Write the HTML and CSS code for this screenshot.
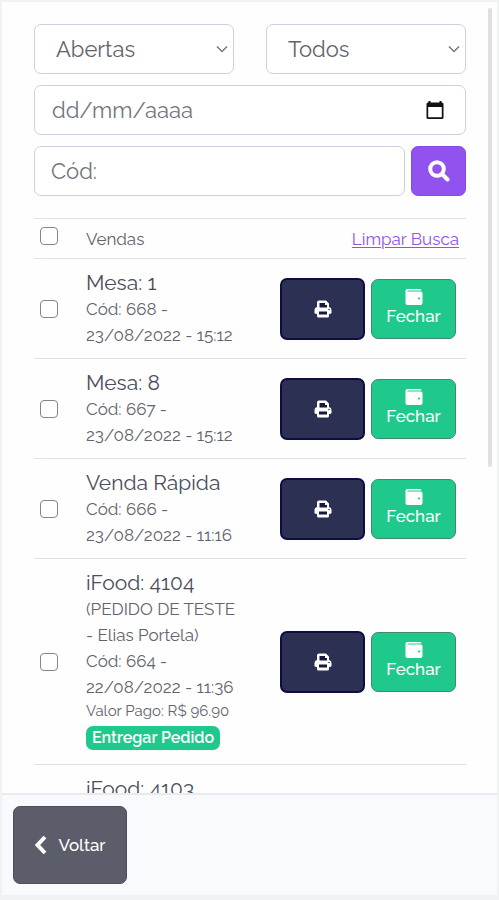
FILE: index.html
```html
<!DOCTYPE html>
<html lang="pt-BR">
<head>
<meta charset="utf-8">
<meta name="viewport" content="width=device-width, initial-scale=1">
<title>Vendas</title>
<link rel="stylesheet" href="styles.css">
</head>
<body>
<svg class="sprite" aria-hidden="true">
  <symbol id="print" viewBox="0 0 18 18">
    <path d="M3 7V2.500Q3 .5 5 .5H12L15 3.500V7Q17.500 7.500 17.500 10V13Q17.500 14 15 14V16Q15 17.500 13.500 17.500H4.500Q3 17.500 3 16V14Q.5 14 .5 13V10Q.5 7.500 3 7Z" fill="#fff"/>
    <path d="M5.500 3H11V5H13V7.500H5.500ZM5 11.500H13V14.500H5Z" fill="#171a3c"/>
    <circle cx="15" cy="9.500" r=".8" fill="#2c3154"/>
  </symbol>
  <symbol id="wallet" viewBox="0 0 18 16">
    <path d="M2.500 0H15Q16.500 0 16.500 1.500H2.500V2.500H16Q17.500 2.500 17.500 4.500V14Q17.500 16 15.500 16H2.500Q.5 16 .5 14V2Q.5 0 2.500 0Z" fill="#fff"/>
    <circle cx="14" cy="9.500" r="1.100" fill="#1fc98b"/>
  </symbol>
  <symbol id="calendar" viewBox="0 0 18 20">
    <path d="M2.500 1H4.500V2.500H13.500V1H15.500V2.500H16Q17.500 2.500 17.500 4V17.500Q17.500 19 16 19H2Q.5 19 .5 17.500V4Q.5 2.500 2 2.500H2.500ZM2.200 7V17.300H15.800V7Z" fill="#111" fill-rule="evenodd"/>
  </symbol>
</svg>
<div class="app">
  <main class="content">
    <form class="filters">
      <div class="selects">
        <div class="select">
          <select aria-label="Situação"><option>Abertas</option></select>
          <svg class="chevron" viewBox="0 0 12 8" aria-hidden="true"><path d="M1 1.500L6 6.500L11 1.500"/></svg>
        </div>
        <div class="select">
          <select aria-label="Tipo"><option>Todos</option></select>
          <svg class="chevron" viewBox="0 0 12 8" aria-hidden="true"><path d="M1 1.500L6 6.500L11 1.500"/></svg>
        </div>
      </div>
      <div class="field date">
        <input type="text" aria-label="Data" placeholder="dd/mm/aaaa">
        <button type="button" class="pick" aria-label="Abrir calendário"><svg width="18" height="20"><use href="#calendar"/></svg></button>
      </div>
      <div class="search">
        <input class="field" type="text" aria-label="Código" placeholder="Cód:">
        <button class="go" type="button" aria-label="Buscar"><svg width="22" height="22" viewBox="0 0 22 22"><circle cx="9" cy="9" r="6.800"/><path d="M14 14L19.500 19.500"/></svg></button>
      </div>
    </form>
    <table>
      <thead>
        <tr>
          <th class="check"><input type="checkbox" aria-label="Selecionar todas"></th>
          <th>Vendas</th>
          <th class="clear"><a href="#">Limpar Busca</a></th>
        </tr>
      </thead>
      <tbody>
        <tr>
          <td class="check"><input type="checkbox" aria-label="Selecionar Mesa: 1"></td>
          <td class="sale"><div class="name">Mesa: 1</div><div>Cód: 668 - <span class="when">23/08/2022 - 15:12</span></div></td>
          <td><div class="actions"><button class="print" aria-label="Imprimir"><svg width="18" height="18"><use href="#print"/></svg></button><button class="close"><svg width="18" height="16"><use href="#wallet"/></svg>Fechar</button></div></td>
        </tr>
        <tr>
          <td class="check"><input type="checkbox" aria-label="Selecionar Mesa: 8"></td>
          <td class="sale"><div class="name">Mesa: 8</div><div>Cód: 667 - <span class="when">23/08/2022 - 15:12</span></div></td>
          <td><div class="actions"><button class="print" aria-label="Imprimir"><svg width="18" height="18"><use href="#print"/></svg></button><button class="close"><svg width="18" height="16"><use href="#wallet"/></svg>Fechar</button></div></td>
        </tr>
        <tr>
          <td class="check"><input type="checkbox" aria-label="Selecionar Venda Rápida"></td>
          <td class="sale"><div class="name">Venda Rápida</div><div>Cód: 666 - <span class="when">23/08/2022 - 11:16</span></div></td>
          <td><div class="actions"><button class="print" aria-label="Imprimir"><svg width="18" height="18"><use href="#print"/></svg></button><button class="close"><svg width="18" height="16"><use href="#wallet"/></svg>Fechar</button></div></td>
        </tr>
        <tr>
          <td class="check"><input type="checkbox" aria-label="Selecionar iFood: 4104"></td>
          <td class="sale"><div class="name">iFood: 4104</div><div>(PEDIDO DE TESTE - Elias Portela)</div><div>Cód: 664 - <span class="when">22/08/2022 - 11:36</span></div><div class="paid">Valor Pago: R$ 96.90</div><span class="badge">Entregar Pedido</span></td>
          <td><div class="actions"><button class="print" aria-label="Imprimir"><svg width="18" height="18"><use href="#print"/></svg></button><button class="close"><svg width="18" height="16"><use href="#wallet"/></svg>Fechar</button></div></td>
        </tr>
        <tr>
          <td class="check"></td>
          <td class="sale"><div class="name">iFood: 4103</div></td>
          <td></td>
        </tr>
      </tbody>
    </table>
    <div class="thumb"></div>
  </main>
  <footer>
    <button class="back"><svg width="14" height="20" viewBox="0 0 14 20" aria-hidden="true"><path d="M11 2L3.500 10L11 18"/></svg>Voltar</button>
  </footer>
</div>
</body>
</html>
```
FILE: styles.css
```css
* { box-sizing: border-box; }
body {
  margin: 0;
  background: #f1f2f3;
  color: #62646d;
  font-family: Raleway, Lato, "Open Sans", sans-serif;
  font-size: 17px;
  line-height: 26px;
}
button, input, select { font: inherit; color: inherit; }
button { padding: 0; cursor: pointer; }
svg { flex: none; }
.sprite { display: none; }

.app {
  display: flex;
  flex-direction: column;
  height: 100vh;
  padding: 2px 2px 5px;
}
.content {
  position: relative;
  flex: 1;
  min-height: 0;
  overflow: hidden;
  padding: 22px 31px 0 32px;
  background: #fefefe;
}
.thumb {
  position: absolute;
  top: 6px;
  right: 5px;
  width: 4px;
  height: 58%;
  border-radius: 2px;
  background: #e0e0e2;
}

.filters {
  display: flex;
  flex-direction: column;
  gap: 11px;
  margin-bottom: 22px;
  font-size: 22px;
}
.selects { display: grid; grid-template-columns: 1fr 1fr; gap: 32px; }
.select { position: relative; }
.select select, .field {
  width: 100%;
  height: 50px;
  border: 1px solid #cfcfe0;
  border-radius: 7px;
  background: #fff;
}
.select select { appearance: none; padding: 0 30px 0 21px; outline: none; }
.chevron {
  position: absolute;
  top: 21px;
  right: 6px;
  width: 12px;
  height: 8px;
  pointer-events: none;
  fill: none;
  stroke: #777982;
  stroke-width: 1.5;
}
.field { padding: 0 17px; }
.date { display: flex; align-items: center; padding-right: 21px; }
.date input { flex: 1; min-width: 0; padding: 0; border: 0; outline: none; background: none; }
.pick { display: flex; border: 0; background: none; }
::placeholder { color: #73757e; opacity: 1; }
.search { display: flex; gap: 6px; }
.search .field { flex: 1; min-width: 0; padding: 0 16px; }
.go {
  display: flex;
  align-items: center;
  justify-content: center;
  width: 55px;
  border: 1px solid #8749e6;
  border-radius: 7px;
  background: #9152ef;
}
.go svg { fill: none; stroke: #fff; stroke-width: 4; stroke-linecap: round; }

table { width: 100%; border-collapse: collapse; table-layout: fixed; }
tr { border-top: 1px solid #dfe1e9; }
th, td { padding: 11px 0 10px 8px; vertical-align: middle; text-align: left; font-weight: 400; }
th { height: 40px; padding: 0 0 0 8px; }
th:last-child, td:last-child { width: 194px; }
th.check, td.check { width: 44px; padding-left: 6px; }
th.clear { padding-right: 7px; text-align: right; }
.clear a { color: #9152ef; text-underline-offset: 2px; }
.check input {
  display: block;
  appearance: none;
  width: 18px;
  height: 18px;
  margin: 0;
  border: 1px solid #85868c;
  border-radius: 4px;
  background: #fff;
}
th.check input { margin-bottom: 5px; }
td.sale { padding-right: 34px; }
.name { color: #4b4d5b; font-size: 21px; white-space: nowrap; }
.when { white-space: nowrap; }
.paid { font-size: 15px; line-height: 22px; white-space: nowrap; }
.badge {
  display: block;
  width: max-content;
  margin: 4px 0;
  padding: 0 6px;
  border-radius: 7px;
  background: #1fc98b;
  color: #fff;
  font-size: 16px;
  font-weight: 600;
  line-height: 24px;
}
.actions { display: flex; align-items: center; gap: 6px; }
.actions button {
  display: flex;
  flex-direction: column;
  align-items: center;
  justify-content: center;
  width: 85px;
  height: 60px;
  border-radius: 7px;
  color: #fff;
}
.actions .print { border: 2px solid #100b45; background: #2c3154; height: 62px; }
.actions .close {
  padding-bottom: 3px;
  border: 1px solid #42896e;
  background: #1fc98b;
  font-weight: 500;
  line-height: 22px;
}

footer {
  padding: 11px;
  border-top: 2px solid #e8eaee;
  background: #f8fafd;
}
.back {
  display: flex;
  align-items: center;
  justify-content: center;
  gap: 10px;
  width: 114px;
  height: 78px;
  border: 1px solid #4c4e5b;
  border-radius: 7px;
  background: #5b5d6a;
  color: #fff;
  font-weight: 500;
}
.back svg { fill: none; stroke: #fff; stroke-width: 4; }
```
